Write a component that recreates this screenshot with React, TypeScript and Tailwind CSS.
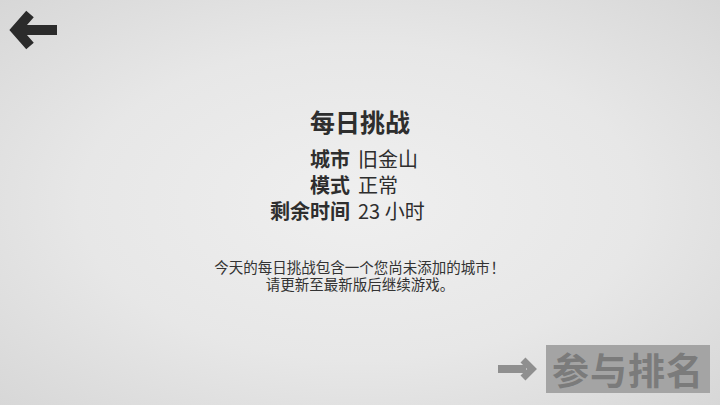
import React from "react";

export default function App() {
  return (
    <div
      className="w-[720px] h-[405px] flex flex-col overflow-hidden bg-[radial-gradient(ellipse_at_center,#efefef_0%,#e7e7e7_55%,#d7d7d7_100%)] text-[#2e2e2e]"
      style={{ fontFamily: '"Noto Sans CJK SC", "Noto Sans", sans-serif' }}
    >
      <div className="h-[50px] flex">
        <svg width="60" height="50" viewBox="0 0 60 50">
          <polyline points="30,14 16,30 30,46" fill="none" stroke="#2b2b2b" strokeWidth="10" strokeLinejoin="miter" />
          <rect x="20" y="25" width="37" height="10" fill="#2b2b2b" />
        </svg>
      </div>
      <div className="mt-[56px] text-center text-[25px] leading-[30px] font-bold">每日挑战</div>
      <div className="mt-[10px] grid grid-cols-[350px_370px] text-[20px] leading-[26px]">
        <div className="text-right font-bold">城市</div>
        <div className="text-left pl-[8px]">旧金山</div>
        <div className="text-right font-bold">模式</div>
        <div className="text-left pl-[8px]">正常</div>
        <div className="text-right font-bold">剩余时间</div>
        <div className="text-left pl-[8px]">23 小时</div>
      </div>
      <div className="mt-[34px] text-center text-[14.5px] leading-[17px] text-[#333]">
        <div>
          今天的每日挑战包含一个您尚未添加的城市<span className="inline-block w-[16px] text-center">！</span>
        </div>
        <div>请更新至最新版后继续游戏。</div>
      </div>
      <div className="mt-auto mb-[12px] mr-[10px] flex justify-end items-center gap-[8px]">
        <svg width="40" height="26" viewBox="0 0 40 26">
          <rect x="0" y="9" width="28" height="8" fill="#8f8f8f" />
          <polyline points="25,4 34,13 25,22" fill="none" stroke="#8f8f8f" strokeWidth="7" strokeLinejoin="miter" />
        </svg>
        <div className="w-[164px] h-[48px] bg-[#a4a4a4] flex items-center justify-center text-[37px] leading-none font-bold text-[#7b7b7b] tracking-[1px]">
          参与排名
        </div>
      </div>
    </div>
  );
}
